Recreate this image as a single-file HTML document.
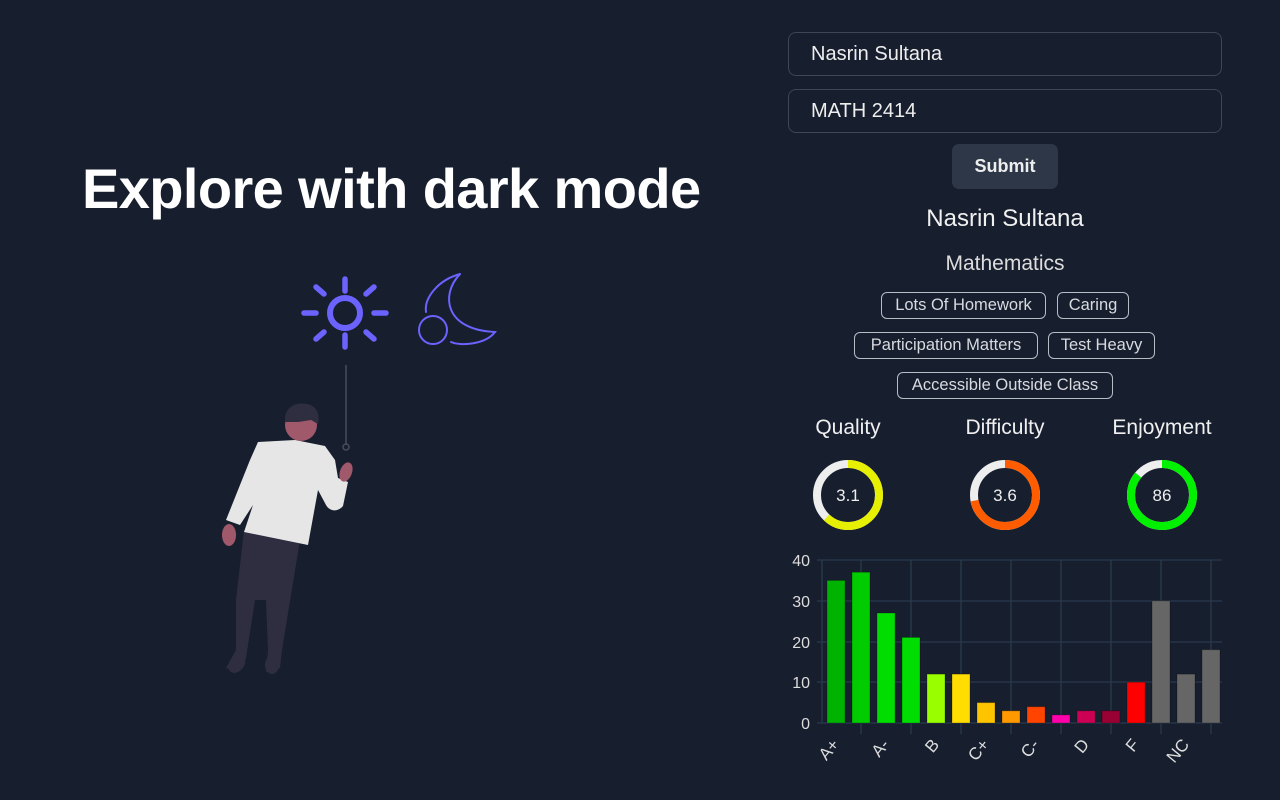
<!DOCTYPE html>
<html><head><style>
body{margin:0;width:1280px;height:800px;background:#171e2e;overflow:hidden;font-family:"Liberation Sans",sans-serif;color:#fff;position:relative}
.abs{position:absolute}
.inp{position:absolute;left:788px;width:434px;height:44px;border:1px solid #3d4656;border-radius:8px;box-sizing:border-box;font-size:20px;line-height:42px;padding-left:22px;color:#eee}
.tag{position:absolute;height:27px;border:1.5px solid #b8bcc4;border-radius:6px;box-sizing:border-box;font-size:16.5px;line-height:24px;color:#d8dae0;text-align:center}
.c{position:absolute;text-align:center;color:#f0f0f0}
</style></head><body>
<div class="abs" style="left:82px;top:156px;font-size:56px;font-weight:bold;color:#fff;letter-spacing:-0.6px">Explore with dark mode</div>

<svg class="abs" style="left:0;top:0" width="760" height="800">
<g stroke="#6c63ff" stroke-linecap="round" fill="none">
<circle cx="345" cy="313" r="15" stroke-width="6"/>
<g stroke-width="5.5">
<line x1="345" y1="279" x2="345" y2="291"/><line x1="345" y1="335" x2="345" y2="347"/>
<line x1="304" y1="313" x2="316" y2="313"/><line x1="374" y1="313" x2="386" y2="313"/>
<line x1="316" y1="287" x2="324" y2="294"/><line x1="366" y1="294" x2="374" y2="287"/>
<line x1="316" y1="339" x2="324" y2="332"/><line x1="366" y1="332" x2="374" y2="339"/>
</g>
<g stroke-width="2">
<path d="M460 274 C438 280 424 298 426 312"/>
<path d="M460 274 C440 295 445 330 495 332 C485 345 460 346 451 342"/>
<circle cx="433" cy="330" r="14"/>
</g>
</g>
<line x1="346" y1="365" x2="346" y2="445" stroke="#4a4a5e" stroke-width="1.5"/>
<circle cx="346" cy="447" r="3" fill="none" stroke="#4a4a5e" stroke-width="1.5"/>
<path d="M244 530 L300 540 L282 650 L280 668 L266 672 L268 650 L266 600 L255 600 L246 658 L236 672 L226 668 L236 650 L236 600 Z" fill="#2f2e41"/>
<ellipse cx="237" cy="664" rx="7" ry="10" fill="#2f2e41" transform="rotate(40 237 664)"/>
<ellipse cx="272" cy="665" rx="7" ry="9" fill="#2f2e41"/>
<ellipse cx="229" cy="535" rx="7" ry="11" fill="#a0596a"/>
<path d="M258 442 L295 440 L325 446 L335 460 L338 478 L348 482 L343 506 C338 512 330 512 326 505 L318 490 L308 545 L244 532 L253 505 L240 525 L226 520 L250 460 Z" fill="#e6e6e6"/>
<ellipse cx="346" cy="472" rx="6" ry="10" fill="#a0596a" transform="rotate(20 346 472)"/>
<circle cx="301" cy="425" r="16" fill="#a0596a"/>
<path d="M285 422 C284 405 298 402 307 404 C318 406 320 416 318 424 L311 420 L298 422 Z" fill="#2f2e41"/>
</svg>

<div class="inp" style="top:32px">Nasrin Sultana</div>
<div class="inp" style="top:89px">MATH 2414</div>
<div class="abs" style="left:952px;top:144px;width:106px;height:45px;background:#2d3748;border-radius:7px;text-align:center;line-height:45px;font-weight:bold;font-size:18px;color:#eee">Submit</div>
<div class="c" style="left:788px;width:434px;top:205px;font-size:24px">Nasrin Sultana</div>
<div class="c" style="left:788px;width:434px;top:252px;font-size:21px;color:#ddd">Mathematics</div>

<div class="tag" style="left:881px;top:292px;width:165px">Lots Of Homework</div>
<div class="tag" style="left:1057px;top:292px;width:72px">Caring</div>
<div class="tag" style="left:854px;top:332px;width:184px">Participation Matters</div>
<div class="tag" style="left:1048px;top:332px;width:107px">Test Heavy</div>
<div class="tag" style="left:897px;top:372px;width:216px">Accessible Outside Class</div>

<div class="c" style="left:788px;width:120px;top:416px;font-size:21px">Quality</div>
<div class="c" style="left:945px;width:120px;top:416px;font-size:21px">Difficulty</div>
<div class="c" style="left:1102px;width:120px;top:416px;font-size:21px">Enjoyment</div>

<svg class="abs" style="left:0;top:0" width="1280" height="800">
<g fill="none" stroke-width="8">
<circle cx="848" cy="495" r="31" stroke="#eee"/>
<circle cx="848" cy="495" r="31" stroke="#e6f000" stroke-dasharray="120.8 200" transform="rotate(-90 848 495)"/>
<circle cx="1005" cy="495" r="31" stroke="#eee"/>
<circle cx="1005" cy="495" r="31" stroke="#ff5c00" stroke-dasharray="140.2 200" transform="rotate(-90 1005 495)"/>
<circle cx="1162" cy="495" r="31" stroke="#eee"/>
<circle cx="1162" cy="495" r="31" stroke="#00f000" stroke-dasharray="167.5 200" transform="rotate(-90 1162 495)"/>
</g>
<g font-family="Liberation Sans" font-size="17" fill="#eee" text-anchor="middle">
<text x="848" y="501">3.1</text><text x="1005" y="501">3.6</text><text x="1162" y="501">86</text>
</g>
<g stroke="#2a3a4e" stroke-width="1.3">
<line x1="817" y1="560" x2="1222" y2="560"/><line x1="817" y1="601" x2="1222" y2="601"/>
<line x1="817" y1="642" x2="1222" y2="642"/><line x1="817" y1="682" x2="1222" y2="682"/>
<line x1="817" y1="723" x2="1222" y2="723"/>
<line x1="822" y1="560" x2="822" y2="723"/>
<line x1="861" y1="560" x2="861" y2="734"/><line x1="911" y1="560" x2="911" y2="734"/>
<line x1="961" y1="560" x2="961" y2="734"/><line x1="1011" y1="560" x2="1011" y2="734"/>
<line x1="1061" y1="560" x2="1061" y2="734"/><line x1="1111" y1="560" x2="1111" y2="734"/>
<line x1="1161" y1="560" x2="1161" y2="734"/><line x1="1211" y1="560" x2="1211" y2="734"/>
</g>
<g font-family="Liberation Sans" font-size="16" fill="#ddd" text-anchor="end">
<text x="810" y="566">40</text><text x="810" y="607">30</text><text x="810" y="648">20</text><text x="810" y="688">10</text><text x="810" y="729">0</text>
</g>
<g stroke="rgba(0,0,0,0.25)" stroke-width="1">
<rect x="827" y="580.4" width="18" height="142.6" fill="#00b300"/>
<rect x="852" y="572.2" width="18" height="150.8" fill="#00cc00"/>
<rect x="877" y="613" width="18" height="110" fill="#00dd00"/>
<rect x="902" y="637.4" width="18" height="85.6" fill="#00dd00"/>
<rect x="927" y="674.1" width="18" height="48.9" fill="#99ff00"/>
<rect x="952" y="674.1" width="18" height="48.9" fill="#ffdd00"/>
<rect x="977" y="702.6" width="18" height="20.4" fill="#ffc400"/>
<rect x="1002" y="710.8" width="18" height="12.2" fill="#ff9900"/>
<rect x="1027" y="706.7" width="18" height="16.3" fill="#ff4400"/>
<rect x="1052" y="714.9" width="18" height="8.1" fill="#ff00aa"/>
<rect x="1077" y="710.8" width="18" height="12.2" fill="#cc0055"/>
<rect x="1102" y="710.8" width="18" height="12.2" fill="#990033"/>
<rect x="1127" y="682.2" width="18" height="40.8" fill="#ff0000"/>
<rect x="1152" y="600.8" width="18" height="122.2" fill="#666"/>
<rect x="1177" y="674.1" width="18" height="48.9" fill="#666"/>
<rect x="1202" y="649.7" width="18" height="73.3" fill="#666"/>
</g>
<g font-family="Liberation Sans" font-size="17" fill="#ddd" text-anchor="end">
<text transform="translate(840 745) rotate(-50)">A+</text>
<text transform="translate(890 745) rotate(-50)">A-</text>
<text transform="translate(940 745) rotate(-50)">B</text>
<text transform="translate(990 745) rotate(-50)">C+</text>
<text transform="translate(1040 745) rotate(-50)">C-</text>
<text transform="translate(1090 745) rotate(-50)">D</text>
<text transform="translate(1140 745) rotate(-50)">F</text>
<text transform="translate(1190 745) rotate(-50)">NC</text>
</g>
</svg>
</body></html>
